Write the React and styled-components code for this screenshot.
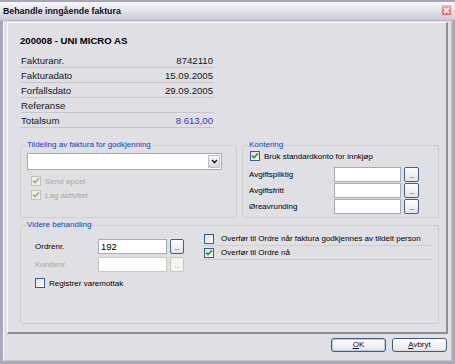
import React from "react";
import styled, { createGlobalStyle } from "styled-components";

const GlobalStyle = createGlobalStyle`
  html, body {
    margin: 0;
    padding: 0;
    background: #e0dfe3;
  }
  body {
    font-family: "Liberation Sans", Arial, sans-serif;
    color: #000;
  }
`;

const Window = styled.div`
  width: 455px;
  height: 364px;
  display: flex;
  flex-direction: column;
  background: #e0dfe3;
  overflow: hidden;
`;

const TitleBar = styled.div`
  flex: none;
  height: 21px;
  box-sizing: border-box;
  display: flex;
  align-items: center;
  justify-content: space-between;
  padding: 0 3px 0 3px;
  border-top: 2px solid #a6a6b6;
  border-bottom: 1px solid #b6b6c6;
  background: linear-gradient(#f8f8fb, #e4e4ec 45%, #cacad8);
`;

const TitleText = styled.span`
  font-size: 8.8px;
  font-weight: bold;
  color: #111;
`;

const CloseButton = styled.div`
  width: 11px;
  height: 11px;
  box-sizing: border-box;
  border: 1px solid #f4c4c4;
  border-radius: 2px;
  background: linear-gradient(#f4a0a0, #e46464);
  display: flex;
  align-items: center;
  justify-content: center;
  margin-top: -1px;
`;

const Client = styled.div`
  flex: 1;
  display: flex;
  flex-direction: column;
  border-style: solid;
  border-color: #a9a9bb;
  border-width: 0 3px 3px 3px;
  box-shadow: inset 1px 0 #fbfbf4, inset -1px -1px #c4c4d0;
  padding: 1px 4px 0 4px;
`;

const Panel = styled.div`
  flex: 1;
  display: flex;
  flex-direction: column;
  border-style: solid;
  border-width: 1px 2px 2px 1px;
  border-color: #fbfbfb #8e8e94 #8e8e94 #fbfbfb;
  padding: 12px 7px 0 12px;
`;

const Heading = styled.div`
  font-size: 9.6px;
  font-weight: bold;
  line-height: 12px;
  height: 12px;
  margin-bottom: 6px;
`;

const InfoTable = styled.div`
  width: 194px;
  display: flex;
  flex-direction: column;
`;

const InfoRow = styled.div`
  display: flex;
  justify-content: space-between;
  align-items: center;
  height: 14px;
  border-bottom: 1px solid #c6c6cc;
  font-size: 9.6px;
  padding: 0 1px;
  color: #161616;
`;

const InfoValue = styled.span`
  color: ${({ $accent }) => ($accent ? "#3434d6" : "#161616")};
`;

const GroupRow = styled.div`
  display: flex;
  gap: 5px;
  margin-top: ${({ $gap }) => $gap};
`;

const GroupBox = styled.div`
  position: relative;
  box-sizing: border-box;
  border: 1px solid #cfcfc6;
  border-radius: 3px;
  width: ${({ $width }) => $width || "auto"};
  flex: ${({ $width }) => ($width ? "none" : "1")};
  height: ${({ $height }) => $height};
`;

const Legend = styled.span`
  position: absolute;
  top: -6px;
  left: 5px;
  padding: 0 1px;
  font-size: 8px;
  line-height: 10px;
  color: #0046d5;
  background: #e0dfe3;
`;

const AssignBody = styled.div`
  display: flex;
  flex-direction: column;
  padding: 7px 0 0 6px;
`;

const Combo = styled.div`
  width: 195px;
  height: 17px;
  box-sizing: border-box;
  border: 1px solid #a5acb2;
  background: #fff;
  display: flex;
  justify-content: flex-end;
  padding: 1px;
`;

const ComboArrow = styled.div`
  width: 12px;
  box-sizing: border-box;
  border: 1px solid #b8bcc8;
  border-radius: 1px;
  background: linear-gradient(#fafafc, #d8dae2);
  display: flex;
  align-items: center;
  justify-content: center;
`;

const CheckRow = styled.div`
  display: flex;
  align-items: center;
  gap: 4px;
  height: 14px;
  font-size: 8px;
  padding-left: ${({ $indent }) => $indent || "0"};
  color: ${({ $disabled }) => ($disabled ? "#aca899" : "#000")};
`;

const CheckList = styled.div`
  display: flex;
  flex-direction: column;
  margin-top: 4px;
`;

const Box = styled.span`
  width: 10px;
  height: 10px;
  box-sizing: border-box;
  flex: none;
  border: 1px solid ${({ $disabled }) => ($disabled ? "#c4c2b6" : "#3a5f8c")};
  background: ${({ $disabled }) =>
    $disabled ? "#eeede6" : "linear-gradient(135deg, #dcdcd8, #ffffff)"};
  display: flex;
  align-items: center;
  justify-content: center;
`;

const PostingBody = styled.div`
  display: flex;
  flex-direction: column;
  padding: 3px 0 0 6px;
`;

const PostingGrid = styled.div`
  display: grid;
  grid-template-columns: 82px 67px 15px;
  column-gap: 3px;
  row-gap: 1px;
  align-items: center;
  margin-top: 4px;
`;

const Label = styled.span`
  font-size: 8px;
  color: ${({ $disabled }) => ($disabled ? "#aca899" : "#000")};
`;

const Input = styled.div`
  height: 15px;
  box-sizing: border-box;
  border: 1px solid ${({ $disabled }) => ($disabled ? "#cdcbc0" : "#a5acb2")};
  background: #fff;
  font-size: 9.5px;
  line-height: 13px;
  padding-left: 2px;
`;

const DotsButton = styled.div`
  height: 15px;
  box-sizing: border-box;
  border: 1px solid ${({ $disabled }) => ($disabled ? "#cbc9bd" : "#42608e")};
  border-radius: 2px;
  background: ${({ $disabled }) =>
    $disabled ? "#f4f3ee" : "linear-gradient(#ffffff, #e4e4ea)"};
  color: ${({ $disabled }) => ($disabled ? "#b8b6aa" : "#333")};
  font-size: 8px;
  line-height: 15px;
  text-align: center;
  letter-spacing: -0.5px;
`;

const FollowUp = styled.div`
  display: flex;
  align-items: flex-start;
  gap: 18px;
  padding: 6px 5px 0 14px;
`;

const OrderColumn = styled.div`
  display: flex;
  flex-direction: column;
  padding-top: 7px;
`;

const OrderGrid = styled.div`
  display: grid;
  grid-template-columns: 60px 69px 14px;
  column-gap: 3px;
  row-gap: 3px;
  align-items: center;
`;

const TransferColumn = styled.div`
  flex: 1;
  display: flex;
  flex-direction: column;
`;

const TransferRow = styled.div`
  display: flex;
  align-items: center;
  gap: 7px;
  height: 13px;
  padding-left: 2px;
  font-size: 8px;
  border-bottom: 1px solid #cdcdd2;
`;

const ButtonRow = styled.div`
  flex: none;
  display: flex;
  justify-content: flex-end;
  gap: 6px;
  margin: 4px 1px 9px 0;
`;

const DialogButton = styled.div`
  width: 55px;
  height: 14px;
  box-sizing: border-box;
  border: 1px solid #3f5c88;
  border-radius: 3px;
  background: linear-gradient(#ffffff, #ececf0 80%, #d8d8e0);
  box-shadow: ${({ $default }) =>
    $default ? "inset 0 0 0 1px #b9cdf0" : "none"};
  font-size: 8px;
  line-height: 12px;
  text-align: center;
  color: #111;
`;

const Checkmark = ({ disabled }) => (
  <svg width="8" height="8" viewBox="0 0 8 8">
    <path
      d="M1 3.6 L3 5.6 L7 1.4"
      fill="none"
      stroke={disabled ? "#aca899" : "#21a121"}
      strokeWidth="1.7"
    />
  </svg>
);

const CheckBox = ({ checked, disabled }) => (
  <Box $disabled={disabled}>{checked && <Checkmark disabled={disabled} />}</Box>
);

const info = [
  ["Fakturanr.", "8742110"],
  ["Fakturadato", "15.09.2005"],
  ["Forfallsdato", "29.09.2005"],
  ["Referanse", ""],
  ["Totalsum", "8 613,00", true],
];

export default function App() {
  return (
    <>
      <GlobalStyle />
      <Window>
        <TitleBar>
          <TitleText>Behandle inngående faktura</TitleText>
          <CloseButton>
            <svg width="7" height="7" viewBox="0 0 7 7">
              <path d="M1 1 L6 6 M6 1 L1 6" stroke="#fff" strokeWidth="1.8" />
            </svg>
          </CloseButton>
        </TitleBar>
        <Client>
          <Panel>
            <Heading>200008 - UNI MICRO AS</Heading>
            <InfoTable>
              {info.map(([label, value, accent]) => (
                <InfoRow key={label}>
                  <span>{label}</span>
                  <InfoValue $accent={accent}>{value}</InfoValue>
                </InfoRow>
              ))}
            </InfoTable>

            <GroupRow $gap="17px">
              <GroupBox $width="217px" $height="73px">
                <Legend>Tildeling av faktura for godkjenning</Legend>
                <AssignBody>
                  <Combo>
                    <ComboArrow>
                      <svg width="7" height="5" viewBox="0 0 7 5">
                        <path d="M1 1 L3.5 3.5 L6 1" fill="none" stroke="#222" strokeWidth="1.6" />
                      </svg>
                    </ComboArrow>
                  </Combo>
                  <CheckList>
                    <CheckRow $indent="4px" $disabled>
                      <CheckBox checked disabled />
                      Send epost
                    </CheckRow>
                    <CheckRow $indent="4px" $disabled>
                      <CheckBox checked disabled />
                      Lag aktivitet
                    </CheckRow>
                  </CheckList>
                </AssignBody>
              </GroupBox>

              <GroupBox $height="73px">
                <Legend>Kontering</Legend>
                <PostingBody>
                  <CheckRow $indent="1px">
                    <CheckBox checked />
                    Bruk standardkonto for innkjøp
                  </CheckRow>
                  <PostingGrid>
                    <Label>Avgiftspliktig</Label>
                    <Input />
                    <DotsButton>...</DotsButton>
                    <Label>Avgiftsfritt</Label>
                    <Input />
                    <DotsButton>...</DotsButton>
                    <Label>Øreavrunding</Label>
                    <Input />
                    <DotsButton>...</DotsButton>
                  </PostingGrid>
                </PostingBody>
              </GroupBox>
            </GroupRow>

            <GroupRow $gap="7px">
              <GroupBox $height="99px">
                <Legend>Videre behandling</Legend>
                <FollowUp>
                  <OrderColumn>
                    <OrderGrid>
                      <Label>Ordrenr.</Label>
                      <Input>192</Input>
                      <DotsButton>...</DotsButton>
                      <Label $disabled>Kundenr.</Label>
                      <Input $disabled />
                      <DotsButton $disabled>...</DotsButton>
                    </OrderGrid>
                    <CheckList>
                      <CheckRow>
                        <CheckBox />
                        Registrer varemottak
                      </CheckRow>
                    </CheckList>
                  </OrderColumn>
                  <TransferColumn>
                    <TransferRow>
                      <CheckBox />
                      Overfør til Ordre når faktura godkjennes av tildelt person
                    </TransferRow>
                    <TransferRow>
                      <CheckBox checked />
                      Overfør til Ordre nå
                    </TransferRow>
                  </TransferColumn>
                </FollowUp>
              </GroupBox>
            </GroupRow>
          </Panel>
          <ButtonRow>
            <DialogButton $default>
              <u>O</u>K
            </DialogButton>
            <DialogButton>
              <u>A</u>vbryt
            </DialogButton>
          </ButtonRow>
        </Client>
      </Window>
    </>
  );
}
